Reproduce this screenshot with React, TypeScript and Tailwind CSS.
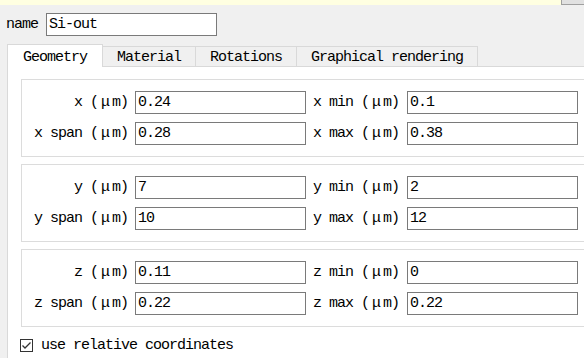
import React from "react";

const Mu = () => <span className="inline-block w-[14px] pl-[3px] text-left">μ</span>;

const Label = ({ name }: { name: string }) => (
  <span className="whitespace-pre">
    {name} (<Mu />m)
  </span>
);

const Box = ({ value, w }: { value: string; w: string }) => (
  <div className={`${w} h-[23px] border border-[#7a7a7a] bg-white flex items-center pl-[2px] pt-px whitespace-pre shrink-0`}>
    {value}
  </div>
);

const Row = ({ a, av, b, bv }: { a: string; av: string; b: string; bv: string }) => (
  <div className="flex items-center h-[23px]">
    <div className="w-[113px] pr-[7px] pt-px text-right shrink-0">
      <Label name={a} />
    </div>
    <Box value={av} w="w-[171px]" />
    <div className="w-[101px] pl-[7px] pt-px shrink-0">
      <Label name={b} />
    </div>
    <Box value={bv} w="w-[171px]" />
  </div>
);

const Group = ({ rows }: { rows: [string, string, string, string][] }) => (
  <div className="w-[620px] border border-[#dcdcdc] py-[11px] flex flex-col gap-[8px]">
    {rows.map((r, i) => (
      <Row key={i} a={r[0]} av={r[1]} b={r[2]} bv={r[3]} />
    ))}
  </div>
);

export default function App() {
  const tabs = [
    { t: "Geometry", w: "w-[96px]" },
    { t: "Material", w: "w-[93px]" },
    { t: "Rotations", w: "w-[101px]" },
    { t: "Graphical rendering", w: "w-[181px]" },
  ];
  return (
    <div className="w-[584px] h-[358px] overflow-hidden bg-[#f0f0f0] flex flex-col font-[family-name:Liberation_Mono,monospace] text-[15px] tracking-[-1px] leading-[16px] text-black">
      <div className="flex h-[5px] shrink-0">
        <div className="flex-1 bg-[#ffffe1]" />
        <div className="w-[23px] h-[5px] border-l border-b border-[#a0a0a0] bg-[#e1e1e1]" />
      </div>
      <div className="flex items-center mt-[8px] pl-[6px] h-[23px] shrink-0">
        <span className="w-[40px] pt-px">name</span>
        <Box value="Si-out" w="w-[171px]" />
      </div>
      <div className="flex items-start ml-[7px] mt-[8px] h-[23px] -mb-px relative z-10 shrink-0">
        {tabs.map((tab, i) =>
          i === 0 ? (
            <div
              key={tab.t}
              className={`${tab.w} h-[23px] bg-white border-t border-l border-r border-[#d9d9d9] flex items-center justify-center pt-[4px]`}
            >
              {tab.t}
            </div>
          ) : (
            <div
              key={tab.t}
              className={`${tab.w} h-[20px] mt-[2px] bg-[#f0f0f0] border-t border-r border-[#d9d9d9] flex items-center justify-center pt-[3px]`}
            >
              {tab.t}
            </div>
          )
        )}
      </div>
      <div className="flex-1 ml-[7px] border-t border-l border-[#d9d9d9] bg-white pl-[13px] pt-[12px] flex flex-col gap-[7px]">
        <Group
          rows={[
            ["x", "0.24", "x min", "0.1"],
            ["x span", "0.28", "x max", "0.38"],
          ]}
        />
        <Group
          rows={[
            ["y", "7", "y min", "2"],
            ["y span", "10", "y max", "12"],
          ]}
        />
        <Group
          rows={[
            ["z", "0.11", "z min", "0"],
            ["z span", "0.22", "z max", "0.22"],
          ]}
        />
        <div className="flex items-center h-[22px] -ml-px">
          <div className="w-[13px] h-[13px] border border-[#333333] bg-white flex items-center justify-center">
            <svg width="11" height="11" viewBox="0 0 11 11">
              <path d="M1.5 5.5 L4 8 L9.5 2.5" stroke="#333" strokeWidth="1.3" fill="none" />
            </svg>
          </div>
          <span className="ml-[8px] pt-[2px] whitespace-pre">use relative coordinates</span>
        </div>
      </div>
    </div>
  );
}
